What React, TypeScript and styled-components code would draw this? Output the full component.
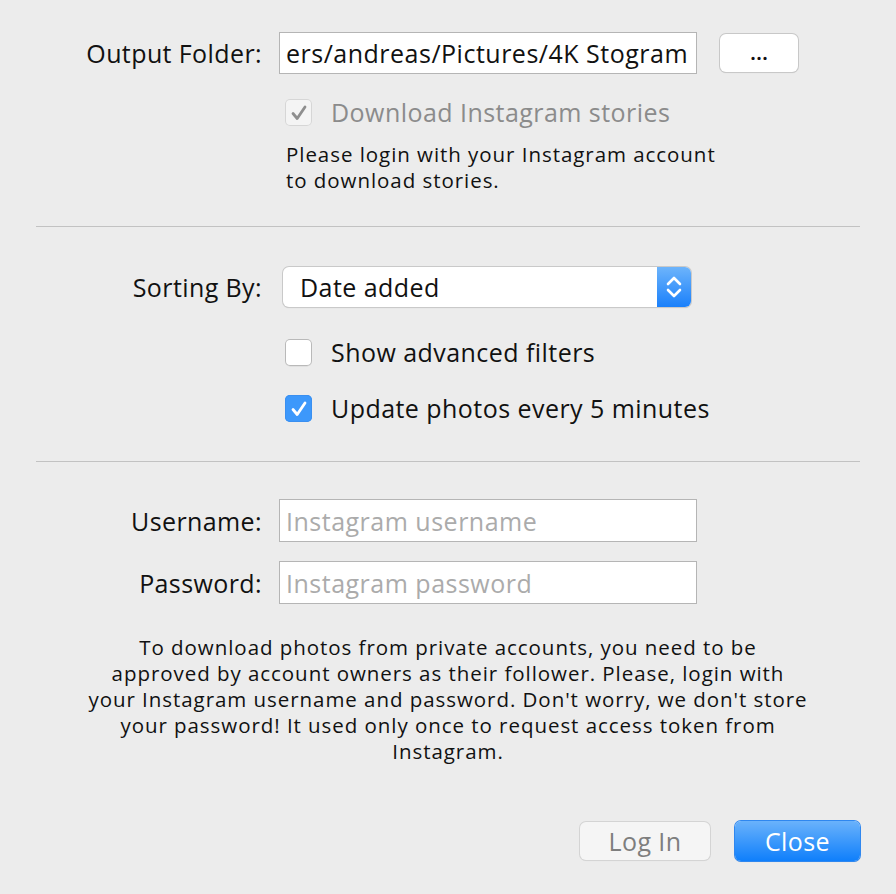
import React from "react";
import styled, { createGlobalStyle } from "styled-components";

const Global = createGlobalStyle`
  html, body { margin: 0; padding: 0; background: #ececec; }
  body { font-family: "Open Sans", "Liberation Sans", sans-serif; color: #111; }
  * { box-sizing: border-box; }
`;

const Page = styled.div`
  width: 896px;
  height: 894px;
  padding-top: 32px;
  display: flex;
  flex-direction: column;
`;

const FieldRow = styled.div<{ $mt?: number }>`
  display: grid;
  grid-template-columns: 262px 1fr;
  column-gap: 17px;
  align-items: center;
  margin-top: ${(p) => p.$mt ?? 0}px;
`;

const Label = styled.label`
  text-align: right;
  font-size: 25px;
  line-height: 30px;
  letter-spacing: 0.4px;
  color: #111;
`;

const Controls = styled.div`
  display: flex;
  align-items: center;
`;

const TextBox = styled.div<{ $h: number; $placeholder?: boolean }>`
  width: 418px;
  height: ${(p) => p.$h}px;
  background: #fff;
  border: 1px solid #b5b5b5;
  padding: 0 6px;
  display: flex;
  align-items: center;
  font-size: 25px;
  letter-spacing: 0.5px;
  color: ${(p) => (p.$placeholder ? "#ababab" : "#111")};
  white-space: nowrap;
  overflow: hidden;
`;

const SmallButton = styled.button`
  margin-left: 23px;
  width: 78px;
  height: 38px;
  border: none;
  border-radius: 6px;
  background: #fff;
  box-shadow: 0 0 0 1px #c8c8c8, 0 1px 1px rgba(0, 0, 0, 0.15);
  font-family: inherit;
  font-size: 22px;
  font-weight: 600;
  color: #111;
  padding: 0 0 4px;
  line-height: 1;
`;

const CheckRow = styled.div<{ $mt: number; $disabled?: boolean }>`
  display: flex;
  align-items: center;
  gap: 19px;
  margin-top: ${(p) => p.$mt}px;
  padding-left: 285px;
  font-size: 25px;
  line-height: 27px;
  letter-spacing: 0.45px;
  color: ${(p) => (p.$disabled ? "#8b8b8b" : "#111")};
`;

const Box = styled.span<{ $checked?: boolean; $disabled?: boolean }>`
  width: 27px;
  height: 27px;
  border-radius: 5px;
  flex: none;
  display: flex;
  align-items: center;
  justify-content: center;
  background: ${(p) => (p.$checked && !p.$disabled ? "#3d98fb" : p.$disabled ? "#f4f4f4" : "#fff")};
  box-shadow: ${(p) =>
    p.$checked && !p.$disabled
      ? "inset 0 0 0 1px #3a8ff0"
      : p.$disabled
      ? "inset 0 0 0 1px #d6d6d6"
      : "inset 0 0 0 1px #b9b9b9, 0 0.5px 0.5px rgba(0,0,0,0.1)"};
`;

const Note = styled.p<{ $mt: number }>`
  margin: ${(p) => p.$mt}px 0 0 286px;
  font-size: 20.5px;
  line-height: 26px;
  letter-spacing: 0.95px;
  color: #111;
`;

const Separator = styled.hr<{ $mt: number }>`
  margin: ${(p) => p.$mt}px 36px 0;
  border: none;
  height: 1px;
  background: #c2c2c2;
`;

const Select = styled.div`
  margin-left: 4px;
  width: 408px;
  height: 40px;
  border-radius: 6px;
  background: #fff;
  box-shadow: 0 0 0 1px #c9c9c9, 0 1px 1px rgba(0, 0, 0, 0.18);
  display: flex;
  align-items: stretch;
  overflow: hidden;
`;

const SelectText = styled.span`
  flex: 1;
  padding-left: 17px;
  display: flex;
  align-items: center;
  font-size: 25px;
  letter-spacing: 0.45px;
  color: #111;
`;

const Stepper = styled.span`
  width: 34px;
  background: linear-gradient(#6db4fb, #1a80fb);
  display: flex;
  align-items: center;
  justify-content: center;
`;

const Paragraph = styled.p<{ $mt: number }>`
  margin: ${(p) => p.$mt}px 0 0;
  text-align: center;
  font-size: 20.5px;
  line-height: 26px;
  letter-spacing: 0.95px;
  color: #111;
`;

const ButtonBar = styled.div`
  margin-top: auto;
  margin-bottom: 33px;
  padding-right: 36px;
  display: flex;
  justify-content: flex-end;
  align-items: center;
  gap: 25px;
`;

const PushButton = styled.button<{ $primary?: boolean }>`
  height: ${(p) => (p.$primary ? 40 : 38)}px;
  width: ${(p) => (p.$primary ? 125 : 130)}px;
  border: none;
  border-radius: 6px;
  font-family: inherit;
  font-size: 25px;
  letter-spacing: 0.4px;
  padding: 0;
  color: ${(p) => (p.$primary ? "#fff" : "#7e7e7e")};
  background: ${(p) => (p.$primary ? "linear-gradient(#6ab2fb, #0f7ffb)" : "#f5f5f5")};
  box-shadow: ${(p) =>
    p.$primary
      ? "0 0 0 1px #2f87ef, 0 1px 1px rgba(0,0,0,0.15)"
      : "0 0 0 1px #d4d4d4, 0 1px 1px rgba(0,0,0,0.08)"};
`;

const Check = ({ color }: { color: string }) => (
  <svg width="18" height="18" viewBox="0 0 18 18">
    <path d="M3 9.5 L7.2 14.5 L15 3" fill="none" stroke={color} strokeWidth="2.8" strokeLinecap="round" strokeLinejoin="round" />
  </svg>
);

const Chevrons = () => (
  <svg width="20" height="28" viewBox="0 0 20 28">
    <path d="M4 11 L10 5 L16 11" fill="none" stroke="#fff" strokeWidth="2.6" strokeLinecap="round" strokeLinejoin="round" />
    <path d="M4 17 L10 23 L16 17" fill="none" stroke="#fff" strokeWidth="2.6" strokeLinecap="round" strokeLinejoin="round" />
  </svg>
);

export default function App() {
  return (
    <>
      <Global />
      <Page>
        <FieldRow>
          <Label>Output Folder:</Label>
          <Controls>
            <TextBox $h={42}>ers/andreas/Pictures/4K Stogram</TextBox>
            <SmallButton>...</SmallButton>
          </Controls>
        </FieldRow>
        <CheckRow $mt={25} $disabled>
          <Box $checked $disabled>
            <Check color="#8e8e8e" />
          </Box>
          Download Instagram stories
        </CheckRow>
        <Note $mt={15}>
          Please login with your Instagram account
          <br />
          to download stories.
        </Note>
        <Separator $mt={33} />

        <FieldRow $mt={40}>
          <Label>Sorting By:</Label>
          <Controls>
            <Select>
              <SelectText>Date added</SelectText>
              <Stepper>
                <Chevrons />
              </Stepper>
            </Select>
          </Controls>
        </FieldRow>
        <CheckRow $mt={32}>
          <Box />
          Show advanced filters
        </CheckRow>
        <CheckRow $mt={29}>
          <Box $checked>
            <Check color="#fff" />
          </Box>
          Update photos every 5 minutes
        </CheckRow>
        <Separator $mt={39} />

        <FieldRow $mt={37}>
          <Label>Username:</Label>
          <Controls>
            <TextBox $h={43} $placeholder>Instagram username</TextBox>
          </Controls>
        </FieldRow>
        <FieldRow $mt={19}>
          <Label>Password:</Label>
          <Controls>
            <TextBox $h={43} $placeholder>Instagram password</TextBox>
          </Controls>
        </FieldRow>
        <Paragraph $mt={30}>
          To download photos from private accounts, you need to be
          <br />
          approved by account owners as their follower. Please, login with
          <br />
          your Instagram username and password. Don't worry, we don't store
          <br />
          your password! It used only once to request access token from
          <br />
          Instagram.
        </Paragraph>
        <ButtonBar>
          <PushButton>Log In</PushButton>
          <PushButton $primary>Close</PushButton>
        </ButtonBar>
      </Page>
    </>
  );
}
